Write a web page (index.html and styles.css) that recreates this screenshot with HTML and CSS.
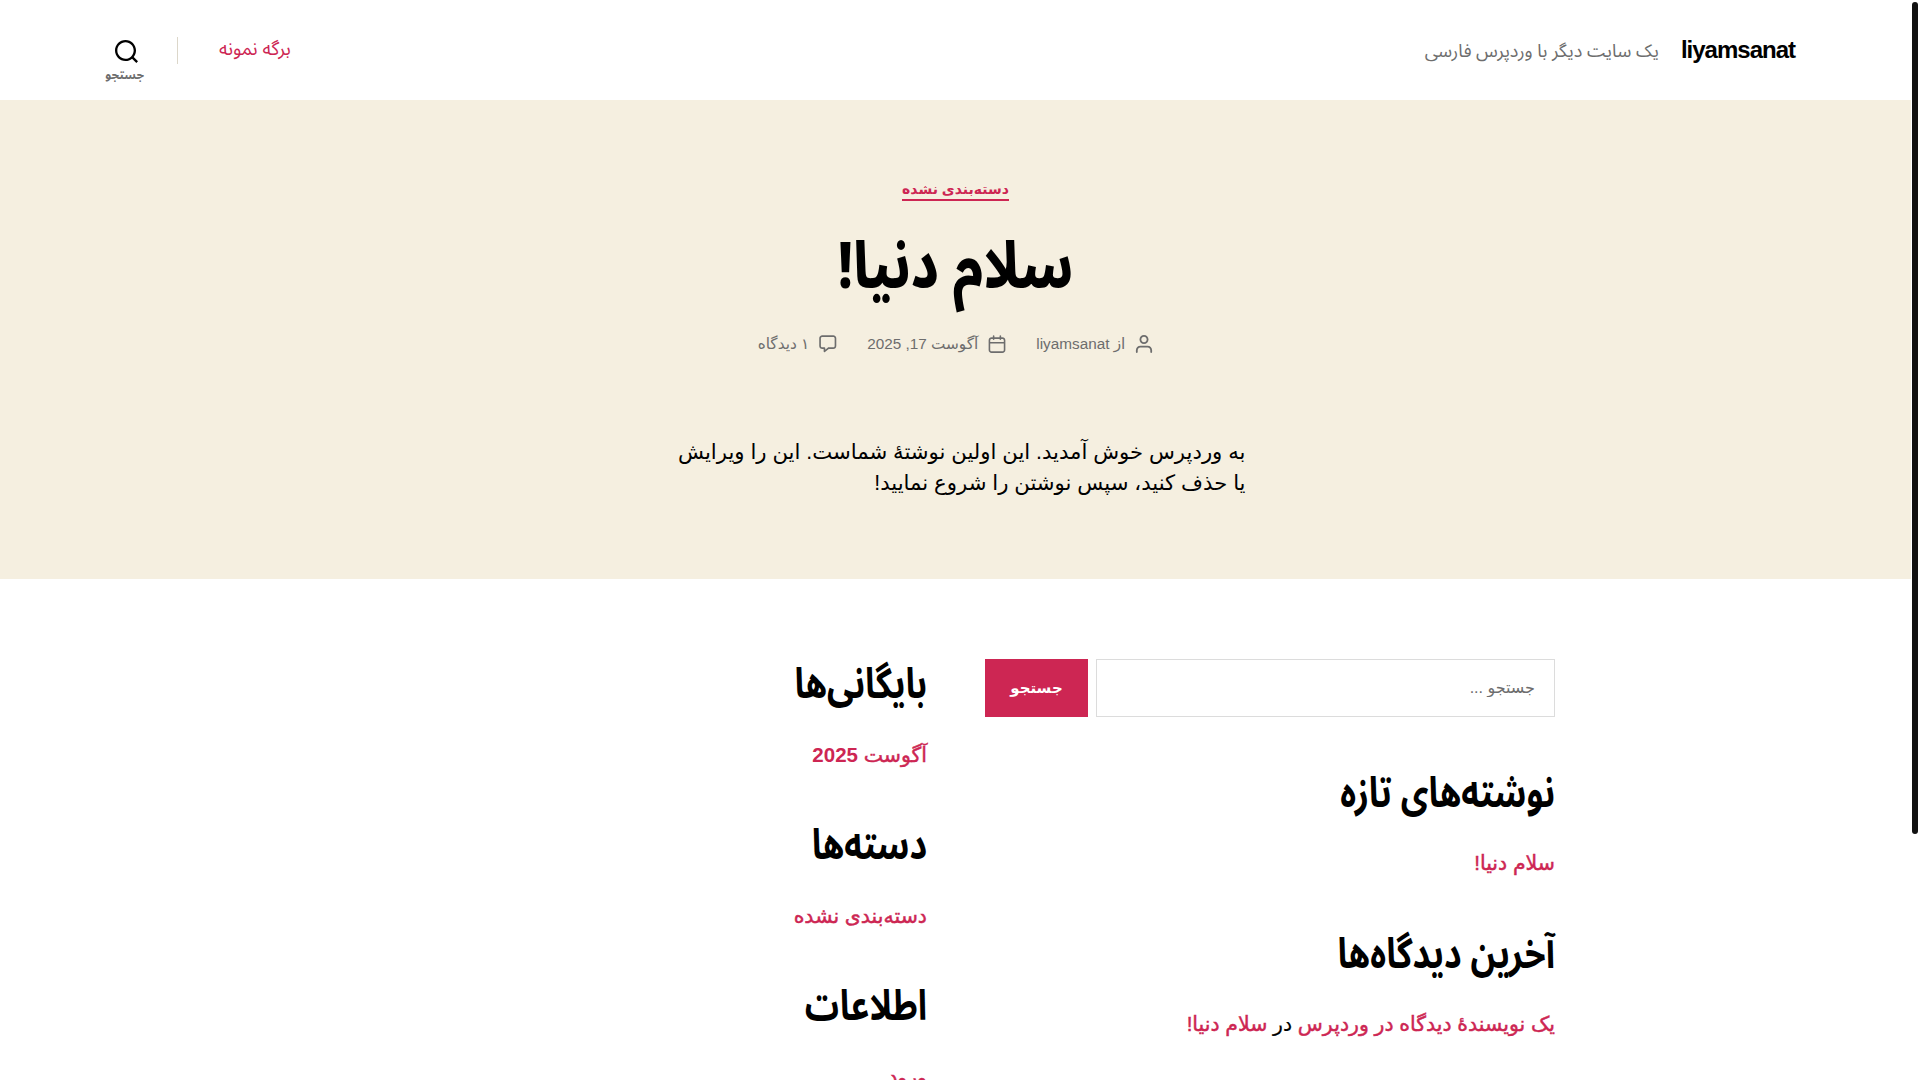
FILE: index.html
```html
<!DOCTYPE html>
<html lang="fa" dir="rtl">
<head>
  <meta charset="UTF-8">
  <meta name="viewport" content="width=device-width, initial-scale=1.0">
  <title>liyamsanat</title>
  <link rel="stylesheet" href="styles.css">
</head>
<body>
  <header class="site-header">
    <div class="header-titles">
      <div class="site-title"><a href="#">liyamsanat</a></div>
      <div class="site-description">یک سایت دیگر با وردپرس فارسی</div>
    </div>
    <div class="header-nav">
      <a class="menu-link" href="#">برگه نمونه</a>
      <button class="search-toggle">
        <svg class="search-icon" viewBox="0 0 23 23"><path d="M38.710696,48.0601792 L43,52.3494831 L41.3494831,54 L37.0601792,49.710696 C35.2632422,51.1481185 32.9839107,52.0076499 30.5038249,52.0076499 C24.7027226,52.0076499 20,47.3049272 20,41.5038249 C20,35.7027226 24.7027226,31 30.5038249,31 C36.3049272,31 41.0076499,35.7027226 41.0076499,41.5038249 C41.0076499,43.9839107 40.1481185,46.2632422 38.710696,48.0601792 Z M36.3875844,47.1716785 C37.8030221,45.7026647 38.6734666,43.7045112 38.6734666,41.5038249 C38.6734666,36.9918565 35.0157934,33.3341833 30.5038249,33.3341833 C25.9918565,33.3341833 22.3341833,36.9918565 22.3341833,41.5038249 C22.3341833,46.0157934 25.9918565,49.6734666 30.5038249,49.6734666 C32.7045112,49.6734666 34.7026647,48.8030221 36.1716785,47.3875844 C36.2023931,47.347638 36.2360451,47.3092237 36.2726343,47.2726343 C36.3092237,47.2360451 36.347638,47.2023931 36.3875844,47.1716785 Z" transform="translate(-20 -31)"/></svg>
        <span class="toggle-text">جستجو</span>
      </button>
    </div>
  </header>

  <section class="post-hero">
    <div class="entry-categories"><a href="#">دسته‌بندی نشده</a></div>
    <h1 class="entry-title">سلام دنیا!</h1>
    <ul class="post-meta">
      <li>
        <svg class="meta-icon" viewBox="0 0 18 20"><path d="M18,19 C18,19.5522847 17.5522847,20 17,20 C16.4477153,20 16,19.5522847 16,19 L16,17 C16,15.3431458 14.6568542,14 13,14 L5,14 C3.34314575,14 2,15.3431458 2,17 L2,19 C2,19.5522847 1.55228475,20 1,20 C0.44771525,20 0,19.5522847 0,19 L0,17 C0,14.2385763 2.23857625,12 5,12 L13,12 C15.7614237,12 18,14.2385763 18,17 L18,19 Z M9,10 C6.23857625,10 4,7.76142375 4,5 C4,2.23857625 6.23857625,0 9,0 C11.7614237,0 14,2.23857625 14,5 C14,7.76142375 11.7614237,10 9,10 Z M9,8 C10.6568542,8 12,6.65685425 12,5 C12,3.34314575 10.6568542,2 9,2 C7.34314575,2 6,3.34314575 6,5 C6,6.65685425 7.34314575,8 9,8 Z"/></svg>
        <span>از <a href="#">liyamsanat</a></span>
      </li>
      <li>
        <svg class="meta-icon" viewBox="0 0 18 19"><path d="M4.60069444,4.09375 L3.25,4.09375 C2.47334957,4.09375 1.84375,4.72334957 1.84375,5.5 L1.84375,7.26736111 L16.15625,7.26736111 L16.15625,5.5 C16.15625,4.72334957 15.5266504,4.09375 14.75,4.09375 L13.3993056,4.09375 L13.3993056,4.55555556 C13.3993056,5.02154581 13.0215458,5.39930556 12.5555556,5.39930556 C12.0895653,5.39930556 11.7118056,5.02154581 11.7118056,4.55555556 L11.7118056,4.09375 L6.28819444,4.09375 L6.28819444,4.55555556 C6.28819444,5.02154581 5.9104347,5.39930556 5.44444444,5.39930556 C4.97845419,5.39930556 4.60069444,5.02154581 4.60069444,4.55555556 L4.60069444,4.09375 Z M6.28819444,2.40625 L11.7118056,2.40625 L11.7118056,1 C11.7118056,0.534009742 12.0895653,0.15625 12.5555556,0.15625 C13.0215458,0.15625 13.3993056,0.534009742 13.3993056,1 L13.3993056,2.40625 L14.75,2.40625 C16.4586309,2.40625 17.84375,3.79136906 17.84375,5.5 L17.84375,15.875 C17.84375,17.5836309 16.4586309,18.96875 14.75,18.96875 L3.25,18.96875 C1.54136906,18.96875 0.15625,17.5836309 0.15625,15.875 L0.15625,5.5 C0.15625,3.79136906 1.54136906,2.40625 3.25,2.40625 L4.60069444,2.40625 L4.60069444,1 C4.60069444,0.534009742 4.97845419,0.15625 5.44444444,0.15625 C5.9104347,0.15625 6.28819444,0.534009742 6.28819444,1 L6.28819444,2.40625 Z M1.84375,8.95486111 L1.84375,15.875 C1.84375,16.6516504 2.47334957,17.28125 3.25,17.28125 L14.75,17.28125 C15.5266504,17.28125 16.15625,16.6516504 16.15625,15.875 L16.15625,8.95486111 L1.84375,8.95486111 Z"/></svg>
        <span>آگوست 17, 2025</span>
      </li>
      <li>
        <svg class="meta-icon" viewBox="0 0 19 19"><path d="M9.43016863,13.2235931 C9.58624731,13.094699 9.7823475,13.0241935 9.98476849,13.0241935 L15.0564516,13.0241935 C15.8581553,13.0241935 16.5080645,12.3742843 16.5080645,11.5725806 L16.5080645,3.44354839 C16.5080645,2.64184472 15.8581553,1.99193548 15.0564516,1.99193548 L3.44354839,1.99193548 C2.64184472,1.99193548 1.99193548,2.64184472 1.99193548,3.44354839 L1.99193548,11.5725806 C1.99193548,12.3742843 2.64184472,13.0241935 3.44354839,13.0241935 L5.76612903,13.0241935 C6.24715123,13.0241935 6.63709677,13.4141391 6.63709677,13.8951613 L6.63709677,15.5301903 L9.43016863,13.2235931 Z M3.44354839,14.766129 C1.67980032,14.766129 0.25,13.3363287 0.25,11.5725806 L0.25,3.44354839 C0.25,1.67980032 1.67980032,0.25 3.44354839,0.25 L15.0564516,0.25 C16.8201997,0.25 18.25,1.67980032 18.25,3.44354839 L18.25,11.5725806 C18.25,13.3363287 16.8201997,14.766129 15.0564516,14.766129 L10.2979143,14.766129 L6.32072889,18.0506004 C5.75274472,18.5196577 4.89516129,18.1156602 4.89516129,17.3790323 L4.89516129,14.766129 L3.44354839,14.766129 Z"/></svg>
        <span>۱ دیدگاه</span>
      </li>
    </ul>
    <p class="entry-excerpt">به وردپرس خوش آمدید. این اولین نوشتهٔ شماست. این را ویرایش یا حذف کنید، سپس نوشتن را شروع نمایید!</p>
  </section>

  <section class="widgets">
    <div class="widget-column">
      <form class="search-form">
        <input class="search-field" type="text" placeholder="جستجو ...">
        <button class="search-submit" type="button">جستجو</button>
      </form>
      <h2 class="widget-title recent-posts">نوشته‌های تازه</h2>
      <div class="widget-line"><a href="#">سلام دنیا!</a></div>
      <h2 class="widget-title">آخرین دیدگاه‌ها</h2>
      <div class="widget-line"><a href="#">یک نویسندهٔ دیدگاه در وردپرس</a> <span class="plain">در</span> <a href="#">سلام دنیا!</a></div>
    </div>
    <div class="widget-column">
      <h2 class="widget-title first">بایگانی‌ها</h2>
      <div class="widget-line"><a href="#">آگوست <b class="num">2025</b></a></div>
      <h2 class="widget-title">دسته‌ها</h2>
      <div class="widget-line"><a href="#">دسته‌بندی نشده</a></div>
      <h2 class="widget-title">اطلاعات</h2>
      <div class="widget-line"><a href="#">ورود</a></div>
    </div>
  </section>

  <div class="scroll-thumb"></div>
</body>
</html>
```

FILE: styles.css
```css
html {
  height: 100%;
  overflow: hidden;
  background: #fff;
}
body {
  margin: 0 9px 0 0;
  height: 100vh;
  overflow: hidden;
  font-family: "Liberation Sans", "DejaVu Sans", sans-serif;
  font-size: 18px;
  color: #000;
  background: #fff;
}
a {
  color: #cd2653;
  text-decoration: none;
}
.site-header {
  display: flex;
  justify-content: space-between;
  align-items: center;
  height: 100px;
  padding: 0 116px 0 108px;
}
.header-titles {
  display: flex;
  align-items: center;
  gap: 22px;
}
.site-title {
  font-size: 24px;
  font-weight: 700;
  letter-spacing: -1px;
}
.site-title a {
  color: #000;
}
.site-description {
  font-family: "Noto Sans Arabic", "DejaVu Sans", sans-serif;
  font-size: 18px;
  color: #6d6d6d;
  margin-top: 1px;
}
.header-nav {
  display: flex;
  align-items: center;
}
.menu-link {
  font-family: "Noto Sans Arabic", "DejaVu Sans", sans-serif;
  font-size: 18.6px;
  margin: -2px 0 0 41px;
}
.search-toggle {
  display: flex;
  flex-direction: column;
  align-items: center;
  padding: 0 33px 0 0;
  border: none;
  border-right: 1px solid #dcd7ca;
  background: none;
  height: 27px;
  font-family: inherit;
}
.search-icon {
  flex: none;
  width: 23px;
  height: 23px;
  fill: #000;
  margin-top: 3px;
}
.toggle-text {
  flex: none;
  width: 36px;
  margin-top: 0;
  font-family: "Noto Sans Arabic", "DejaVu Sans", sans-serif;
  font-size: 12px;
  font-weight: 700;
  color: #6d6d6d;
}
.post-hero {
  height: 479px;
  box-sizing: border-box;
  padding-top: 79px;
  background: #f5efe0;
  text-align: center;
}
.entry-categories {
  font-size: 14px;
  font-weight: 700;
  letter-spacing: 0.5px;
  line-height: 20px;
}
.entry-categories a {
  display: inline-block;
  border-bottom: 2px solid #cd2653;
}
.entry-title {
  margin: 30px 0 0;
  font-family: "Noto Sans Arabic", "DejaVu Sans", sans-serif;
  font-size: 64px;
  font-weight: 800;
  line-height: 73px;
  transform: scaleX(0.83);
}
.post-meta {
  display: flex;
  justify-content: center;
  gap: 30px;
  margin: 31px 0 0;
  padding: 0;
  list-style: none;
  font-size: 15.3px;
  font-weight: 500;
  color: #6d6d6d;
}
.post-meta li {
  display: flex;
  align-items: center;
  gap: 10px;
}
.post-meta a {
  color: #6d6d6d;
}
.meta-icon {
  width: 18px;
  height: 18px;
  fill: #6d6d6d;
}
.entry-excerpt {
  width: 580px;
  margin: 83px auto 0;
  text-align: right;
  font-size: 21.2px;
  line-height: 31px;
}
.widgets {
  display: grid;
  grid-template-columns: 570px 571px;
  gap: 58px;
  width: 1199px;
  margin: 80px 356px 0 auto;
}
.search-form {
  display: flex;
  gap: 8px;
  height: 58px;
}
.search-field {
  flex: 1;
  box-sizing: border-box;
  padding: 0 19px;
  border: 1px solid #dcdcdc;
  background: #fff;
  font-family: inherit;
  font-size: 16px;
}
.search-field::placeholder {
  color: #6d6d6d;
}
.search-submit {
  width: 103px;
  border: none;
  background: #cd2653;
  color: #fff;
  font-family: inherit;
  font-size: 15px;
  font-weight: 600;
}
.widget-title {
  margin: 53.5px 0 0;
  font-family: "Noto Sans Arabic", "DejaVu Sans", sans-serif;
  font-size: 42px;
  font-weight: 700;
  line-height: 45px;
  transform: scaleX(0.81);
  transform-origin: right center;
}
.widget-title.first {
  margin-top: 3px;
}
.widget-title.recent-posts {
  margin-top: 53.5px;
}
.widget-line {
  margin-top: 32.5px;
  font-size: 20.5px;
  line-height: 30px;
}
.widget-line a {
  -webkit-text-stroke: 0.45px;
}
.plain {
  -webkit-text-stroke: 0.2px;
}
.num {
  font-weight: 700;
  -webkit-text-stroke: 0;
}
.scroll-thumb {
  position: fixed;
  top: 2px;
  right: 2px;
  width: 6px;
  height: 832px;
  background: #111;
  border-radius: 3px;
}
```
